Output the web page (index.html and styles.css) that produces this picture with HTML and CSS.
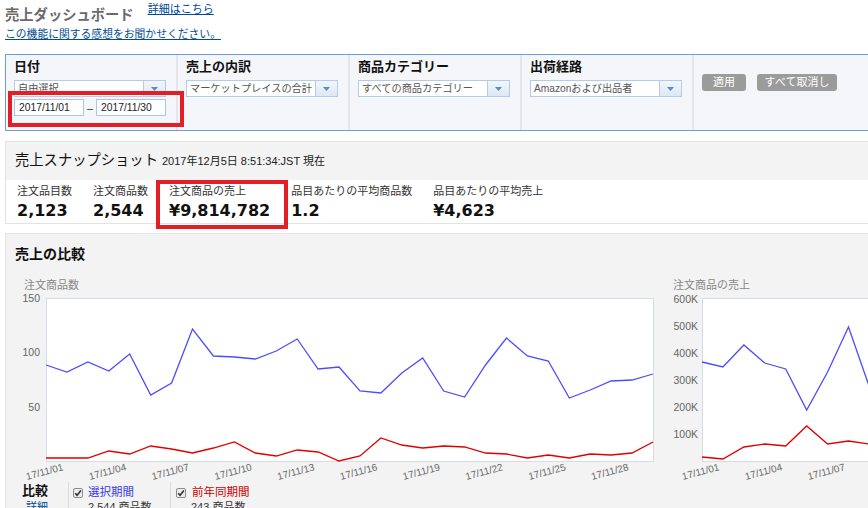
FILE: index.html
```html
<!DOCTYPE html>
<html lang="ja">
<head>
<meta charset="utf-8">
<title>売上ダッシュボード</title>
<link rel="stylesheet" href="styles.css">
</head>
<body>
<div class="page">
  <header class="top">
    <div class="title-row">
      <h1 class="dash-title">売上ダッシュボード</h1>
      <a class="link more-link" href="#">詳細はこちら</a>
    </div>
    <a class="link feedback" href="#">この機能に関する感想をお聞かせください。</a>
  </header>

  <section class="filters">
    <div class="fcol">
      <div class="flabel">日付</div>
      <div class="select"><span class="sel-text">自由選択</span><span class="sel-btn"><svg width="7" height="4" viewBox="0 0 7 4"><polygon points="0,0 7,0 3.5,4" fill="#5a8cc8"/></svg></span></div>
      <div class="dates"><span class="date">2017/11/01</span><span class="dash">–</span><span class="date">2017/11/30</span></div>
    </div>
    <div class="fcol">
      <div class="flabel">売上の内訳</div>
      <div class="select"><span class="sel-text">マーケットプレイスの合計</span><span class="sel-btn"><svg width="7" height="4" viewBox="0 0 7 4"><polygon points="0,0 7,0 3.5,4" fill="#5a8cc8"/></svg></span></div>
    </div>
    <div class="fcol">
      <div class="flabel">商品カテゴリー</div>
      <div class="select"><span class="sel-text">すべての商品カテゴリー</span><span class="sel-btn"><svg width="7" height="4" viewBox="0 0 7 4"><polygon points="0,0 7,0 3.5,4" fill="#5a8cc8"/></svg></span></div>
    </div>
    <div class="fcol">
      <div class="flabel">出荷経路</div>
      <div class="select"><span class="sel-text">Amazonおよび出品者</span><span class="sel-btn"><svg width="7" height="4" viewBox="0 0 7 4"><polygon points="0,0 7,0 3.5,4" fill="#5a8cc8"/></svg></span></div>
    </div>
    <div class="fcol actions">
      <span class="btn btn-apply">適用</span>
      <span class="btn btn-clear">すべて取消し</span>
    </div>
  </section>

  <section class="snapshot">
    <div class="snap-head"><span class="snap-title">売上スナップショット</span><span class="snap-time">2017年12月5日 8:51:34:JST 現在</span></div>
    <div class="snap-body">
      <div class="metric"><div class="metric-label">注文品目数</div><div class="metric-value">2,123</div></div>
      <div class="metric"><div class="metric-label">注文商品数</div><div class="metric-value">2,544</div></div>
      <div class="metric"><div class="metric-label">注文商品の売上</div><div class="metric-value">¥9,814,782</div></div>
      <div class="metric"><div class="metric-label">品目あたりの平均商品数</div><div class="metric-value">1.2</div></div>
      <div class="metric"><div class="metric-label">品目あたりの平均売上</div><div class="metric-value">¥4,623</div></div>
    </div>
  </section>

  <section class="compare">
    <h2 class="compare-title">売上の比較</h2>
    <div class="charts">
      <svg class="chart chart-units" width="659" height="215" viewBox="0 0 659 215">
        <text class="c-title" x="18" y="24">注文商品数</text>
        <text class="c-y" x="34" y="37">150</text>
        <text class="c-y" x="34" y="91">100</text>
        <text class="c-y" x="34" y="146">50</text>
        <rect class="plot" x="40.5" y="33.5" width="607" height="163"/>
        <polyline class="ln-blue" points="40,100 60.9,107 81.9,97 102.8,106 123.7,89 144.7,130 165.6,118 186.5,64 207.4,91 228.4,92 249.3,94 270.2,86 291.2,74 312.1,104 333,102 354,126 374.9,128 395.8,108 416.7,93 437.7,126 458.6,132 479.5,100 500.5,73 521.4,91 542.3,96 563.3,133 584.2,125 605.1,116 626,115 647,109"/>
        <polyline class="ln-red" points="40,193 60.9,193 81.9,193 102.8,186 123.7,189 144.7,181 165.6,184 186.5,188 207.4,183 228.4,177 249.3,188 270.2,191 291.2,185 312.1,187 333,196 354,191 374.9,173 395.8,180 416.7,183 437.7,181 458.6,182 479.5,188 500.5,189 521.4,193 542.3,190 563.3,193 584.2,189 605.1,190 626,188 647,177"/>
        <text class="c-x" x="58" y="205" transform="rotate(-15 58 205)">17/11/01</text>
        <text class="c-x" x="120.8" y="205" transform="rotate(-15 120.8 205)">17/11/04</text>
        <text class="c-x" x="183.6" y="205" transform="rotate(-15 183.6 205)">17/11/07</text>
        <text class="c-x" x="246.4" y="205" transform="rotate(-15 246.4 205)">17/11/10</text>
        <text class="c-x" x="309.2" y="205" transform="rotate(-15 309.2 205)">17/11/13</text>
        <text class="c-x" x="372" y="205" transform="rotate(-15 372 205)">17/11/16</text>
        <text class="c-x" x="434.7" y="205" transform="rotate(-15 434.7 205)">17/11/19</text>
        <text class="c-x" x="497.5" y="205" transform="rotate(-15 497.5 205)">17/11/22</text>
        <text class="c-x" x="560.3" y="205" transform="rotate(-15 560.3 205)">17/11/25</text>
        <text class="c-x" x="623.1" y="205" transform="rotate(-15 623.1 205)">17/11/28</text>
      </svg>
      <svg class="chart chart-sales" width="203" height="215" viewBox="0 0 203 215">
        <text class="c-title" x="8" y="24">注文商品の売上</text>
        <text class="c-y" x="33" y="38">600K</text>
        <text class="c-y" x="33" y="65">500K</text>
        <text class="c-y" x="33" y="92">400K</text>
        <text class="c-y" x="33" y="119">300K</text>
        <text class="c-y" x="33" y="146">200K</text>
        <text class="c-y" x="33" y="173">100K</text>
        <rect class="plot" x="37.5" y="33.5" width="607" height="163"/>
        <polyline class="ln-blue" points="37,97 57.9,102 78.9,80 99.8,98 120.7,104 141.7,145 162.6,107 183.5,62 204.4,122 225.4,135"/>
        <polyline class="ln-red" points="37,192 57.9,194 78.9,182 99.8,179 120.7,181 141.7,161 162.6,179 183.5,176 204.4,179 225.4,180"/>
        <text class="c-x" x="55" y="205" transform="rotate(-15 55 205)">17/11/01</text>
        <text class="c-x" x="117.8" y="205" transform="rotate(-15 117.8 205)">17/11/04</text>
        <text class="c-x" x="180.6" y="205" transform="rotate(-15 180.6 205)">17/11/07</text>
      </svg>
    </div>
    <div class="legend">
      <div class="lg-head">
        <div class="lg-title">比較</div>
        <a class="link lg-link" href="#">詳細</a>
      </div>
      <div class="lg-item">
        <div class="lg-row"><svg class="cb" width="10" height="10" viewBox="0 0 10 10"><rect x="0.5" y="0.5" width="9" height="9" rx="1.5" fill="#ececec" stroke="#8c8c8c"/><path d="M2.2 5.2 L4.1 7.3 L7.9 2.6" fill="none" stroke="#333" stroke-width="1.6"/></svg><span class="lg-blue">選択期間</span></div>
        <div class="lg-sub">2,544 商品数</div>
      </div>
      <div class="lg-item lg-item2">
        <div class="lg-row"><svg class="cb" width="10" height="10" viewBox="0 0 10 10"><rect x="0.5" y="0.5" width="9" height="9" rx="1.5" fill="#ececec" stroke="#8c8c8c"/><path d="M2.2 5.2 L4.1 7.3 L7.9 2.6" fill="none" stroke="#333" stroke-width="1.6"/></svg><span class="lg-red">前年同期間</span></div>
        <div class="lg-sub">243 商品数</div>
      </div>
    </div>
  </section>

  <div class="mark mark-date"></div>
  <div class="mark mark-sales"></div>
</div>
</body>
</html>
```

FILE: styles.css
```css
html, body {
  margin: 0;
  padding: 0;
}
body {
  width: 868px;
  height: 508px;
  overflow: hidden;
  background: #ffffff;
  font-family: "Liberation Sans", "Noto Sans CJK JP", sans-serif;
  color: #222;
}
.page {
  position: relative;
  padding-left: 5px;
}
.link {
  color: #004b91;
  text-decoration: underline;
}

/* header */
.title-row {
  display: flex;
  align-items: flex-start;
}
.dash-title {
  margin: 5px 0 0 0;
  font-size: 14.3px;
  line-height: 20px;
  font-weight: 700;
  color: #6a6a6a;
}
.more-link {
  margin: 2px 0 0 14px;
  font-size: 11px;
  line-height: 14px;
}
.feedback {
  display: block;
  margin-top: 2px;
  font-size: 10.8px;
  line-height: 15px;
}

/* filters */
.filters {
  margin-top: 12px;
  display: flex;
  height: 75px;
  background: #f5f6fa;
  border-top: 1px solid #6b9fd7;
  border-bottom: 1px solid #6b9fd7;
  border-left: 1px solid #6b9fd7;
}
.fcol {
  flex: none;
  width: 162px;
  padding: 3px 0 0 8px;
  border-right: 2px solid #e4e6eb;
}
.fcol.actions {
  flex: 1;
  border-right: none;
  display: flex;
  align-items: flex-start;
  gap: 11px;
  padding-top: 19px;
}
.flabel {
  font-size: 13px;
  line-height: 18px;
  font-weight: 700;
  color: #111;
}
.select {
  display: flex;
  width: 152px;
  height: 17px;
  margin-top: 4px;
  box-sizing: border-box;
  border: 1px solid #b3cde8;
  background: #fff;
}
.sel-text {
  flex: 1;
  padding-left: 3px;
  font-size: 10.2px;
  line-height: 15px;
  color: #555;
  white-space: nowrap;
  overflow: hidden;
}
.sel-btn {
  flex: none;
  width: 21px;
  border-left: 1px solid #b3cde8;
  background: linear-gradient(#f1f6fc, #dde8f5);
  display: flex;
  align-items: center;
  justify-content: center;
}
.dates {
  display: flex;
  align-items: center;
  margin-top: 2px;
}
.date {
  width: 70px;
  height: 17px;
  box-sizing: border-box;
  border: 1px solid #a9c6e4;
  background: #fff;
  padding-left: 4px;
  font-size: 10.3px;
  line-height: 15px;
  color: #222;
}
.dash {
  width: 12px;
  text-align: center;
  font-size: 11px;
  color: #333;
}
.btn {
  height: 17px;
  border-radius: 3px;
  background: #9b9b9b;
  color: #fff;
  font-size: 11px;
  line-height: 17px;
  text-align: center;
}
.btn-apply { width: 44px; }
.btn-clear { width: 80px; }

/* snapshot */
.snapshot {
  margin-top: 10px;
  border: 1px solid #e3e3e3;
  border-right: none;
}
.snap-head {
  height: 30px;
  padding: 8px 0 0 9px;
  background: #f3f3f3;
  line-height: 20px;
}
.snap-title {
  font-size: 14.3px;
  color: #111;
}
.snap-time {
  margin-left: 4px;
  font-size: 11px;
  color: #222;
}
.snap-body {
  display: flex;
  gap: 21px;
  padding: 4px 0 3px 11px;
  background: #fff;
}
.metric-label {
  font-size: 11px;
  line-height: 14px;
  color: #333;
  white-space: nowrap;
}
.metric-value {
  margin-top: 4px;
  font-family: "DejaVu Sans", sans-serif;
  font-weight: 700;
  font-size: 16px;
  line-height: 18px;
  color: #111;
  white-space: nowrap;
}

/* compare */
.compare {
  margin-top: 9px;
  height: 274px;
  overflow: hidden;
  background: #f3f3f3;
  border-top: 1px solid #e6e6e6;
  border-left: 1px solid #e6e6e6;
}
.compare-title {
  margin: 0 0 1px 0;
  padding: 10px 0 0 9px;
  font-size: 14px;
  line-height: 20px;
  font-weight: 700;
  color: #111;
}
.charts {
  display: flex;
}
.chart {
  display: block;
  flex: none;
  overflow: visible;
}
.c-title {
  font-family: "Liberation Sans", "Noto Sans CJK JP", sans-serif;
  font-size: 11px;
  fill: #888;
}
.c-y {
  font-family: "Liberation Sans", sans-serif;
  font-size: 10.5px;
  fill: #666;
  text-anchor: end;
}
.c-x {
  font-family: "Liberation Sans", sans-serif;
  font-size: 10px;
  fill: #666;
  text-anchor: end;
}
.plot {
  fill: #fff;
  stroke: #d4dde6;
  stroke-width: 1;
}
.ln-blue {
  fill: none;
  stroke: #4d4dff;
  stroke-width: 1.3;
}
.ln-red {
  fill: none;
  stroke: #e00000;
  stroke-width: 1.3;
}

/* legend */
.legend {
  display: flex;
  align-items: flex-start;
}
.lg-head {
  width: 46px;
  padding: 2px 0 0 16px;
}
.lg-title {
  font-size: 13px;
  line-height: 18px;
  font-weight: 700;
  color: #111;
}
.lg-link {
  display: block;
  margin-left: 4px;
  font-size: 11px;
  line-height: 14px;
}
.lg-item {
  width: 97px;
  margin-top: 2px;
  padding: 3px 0 0 4px;
  border-left: 1px solid #dcdcdc;
  height: 40px;
}
.lg-item2 {
  padding-left: 5px;
}
.lg-row {
  display: flex;
  align-items: center;
  font-size: 11.5px;
  line-height: 15px;
}
.cb {
  flex: none;
  margin-right: 5px;
}
.lg-item2 .cb {
  margin-right: 6px;
}
.lg-blue { color: #3a3af0; }
.lg-red { color: #d00000; }
.lg-sub {
  padding-left: 15px;
  font-size: 11px;
  line-height: 15px;
  color: #333;
}

/* annotation boxes */
.mark {
  position: absolute;
  box-sizing: border-box;
  border: 4px solid #e31e26;
}
.mark-date {
  left: 8px;
  top: 91px;
  width: 176px;
  height: 36px;
}
.mark-sales {
  left: 156px;
  top: 180px;
  width: 132px;
  height: 49px;
}
```
